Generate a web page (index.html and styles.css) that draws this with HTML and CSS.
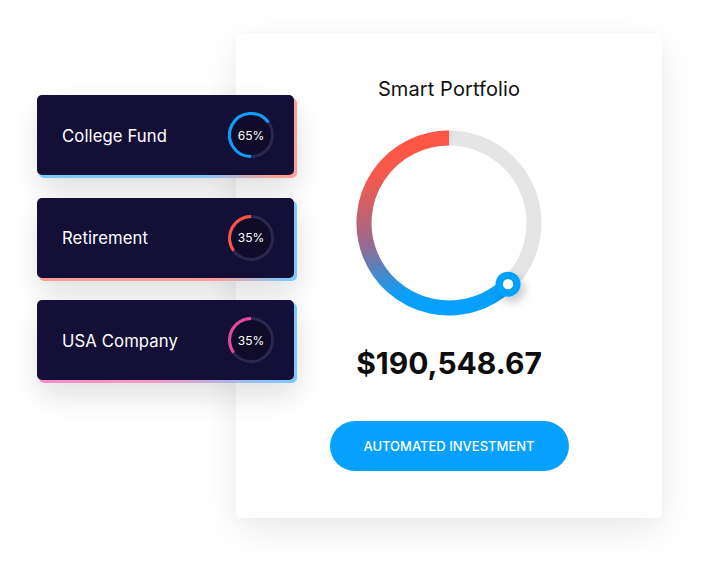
FILE: index.html
```html
<!DOCTYPE html>
<html lang="en">
<head>
<meta charset="utf-8">
<title>Smart Portfolio</title>
<link rel="stylesheet" href="styles.css">
</head>
<body>
<div class="stage">
  <section class="panel">
    <h2 class="title">Smart Portfolio</h2>
    <svg class="ring" viewBox="0 0 200 200" width="200" height="200" aria-hidden="true">
      <defs>
        <linearGradient id="arcGrad" x1="0.3" y1="0" x2="0.5" y2="1">
          <stop offset="0" stop-color="#ff5443"/>
          <stop offset="0.18" stop-color="#f45a4c"/>
          <stop offset="0.55" stop-color="#97698f"/>
          <stop offset="0.88" stop-color="#0a9ffa"/>
          <stop offset="1" stop-color="#06a0fe"/>
        </linearGradient>
        <filter id="knobShadow" x="-80%" y="-80%" width="300%" height="300%">
          <feDropShadow dx="4" dy="5" stdDeviation="5" flood-color="#000" flood-opacity="0.22"/>
        </filter>
        <filter id="innerSoft" x="-10%" y="-10%" width="120%" height="120%">
          <feGaussianBlur stdDeviation="2"/>
        </filter>
      </defs>
      <circle cx="100" cy="100" r="85" fill="none" stroke="#e5e5e5" stroke-width="15"/>
      <path d="M100 15 A85 85 0 1 0 159.05 161.14" fill="none" stroke="#000" stroke-opacity="0.12" stroke-width="4" filter="url(#innerSoft)" transform="translate(2 -4)"/>
      <path d="M100 15 A85 85 0 1 0 159.05 161.14" fill="none" stroke="url(#arcGrad)" stroke-width="15"/>
      <g filter="url(#knobShadow)">
        <circle cx="159.05" cy="161.14" r="12.5" fill="#06a0fe"/>
      </g>
      <circle cx="159.05" cy="161.14" r="5.2" fill="#fff"/>
    </svg>
    <div class="amount">$190,548.67</div>
    <button class="cta" type="button">AUTOMATED INVESTMENT</button>
  </section>

  <div class="goals">
    <div class="goal goal-college">
      <span class="goal-name">College Fund</span>
      <div class="dial">
        <svg viewBox="0 0 46 46" width="46" height="46" aria-hidden="true">
          <circle cx="23" cy="23" r="21.5" fill="#0f0b29" stroke="#2a2750" stroke-width="3"/>
          <path d="M23 44.5 A21.5 21.5 0 1 1 40.39 10.36" fill="none" stroke="#0b9ffb" stroke-width="3"/>
        </svg>
        <span class="dial-value">65%</span>
      </div>
    </div>
    <div class="goal goal-retire">
      <span class="goal-name">Retirement</span>
      <div class="dial">
        <svg viewBox="0 0 46 46" width="46" height="46" aria-hidden="true">
          <circle cx="23" cy="23" r="21.5" fill="#0f0b29" stroke="#2a2750" stroke-width="3"/>
          <path d="M23 1.5 A21.5 21.5 0 0 0 5.61 35.64" fill="none" stroke="#fb5443" stroke-width="3"/>
        </svg>
        <span class="dial-value">35%</span>
      </div>
    </div>
    <div class="goal goal-usa">
      <span class="goal-name">USA Company</span>
      <div class="dial">
        <svg viewBox="0 0 46 46" width="46" height="46" aria-hidden="true">
          <circle cx="23" cy="23" r="21.5" fill="#0f0b29" stroke="#2a2750" stroke-width="3"/>
          <path d="M23 1.5 A21.5 21.5 0 0 0 5.61 35.64" fill="none" stroke="#e2489d" stroke-width="3"/>
        </svg>
        <span class="dial-value">35%</span>
      </div>
    </div>
  </div>
</div>
</body>
</html>
```

FILE: styles.css
```css
* { box-sizing: border-box; }

html, body {
  margin: 0;
  padding: 0;
  background: #fff;
}

body {
  font-family: "Inter", "Liberation Sans", sans-serif;
  width: 703px;
  height: 565px;
  overflow: hidden;
}

.stage {
  position: relative;
  padding: 33px 0 0 236px;
}

.panel {
  width: 426px;
  height: 485px;
  background: #fff;
  border-radius: 5px;
  box-shadow: 0 12px 40px rgba(0, 0, 0, 0.085), 0 2px 8px rgba(0, 0, 0, 0.02);
  display: flex;
  flex-direction: column;
  align-items: center;
  padding-top: 44px;
}

.title {
  margin: 0;
  font-size: 20px;
  line-height: 24px;
  font-weight: 400;
  color: #111;
  letter-spacing: 0.1px;
}

.ring {
  display: block;
  margin-top: 21.5px;
  overflow: visible;
}

.amount {
  margin-top: 22.5px;
  font-size: 30px;
  line-height: 36px;
  font-weight: 700;
  color: #0d0d0d;
  letter-spacing: 0;
}

.cta {
  margin-top: 40px;
  width: 239px;
  height: 50px;
  border: 0;
  border-radius: 25px;
  background: #06a0fe;
  color: #fff;
  font-family: inherit;
  font-size: 13px;
  font-weight: 500;
  letter-spacing: 0;
  cursor: pointer;
}

.goals {
  position: absolute;
  left: 37px;
  top: 95px;
  z-index: 1;
  width: 257px;
  display: flex;
  flex-direction: column;
  gap: 22.5px;
}

.goal {
  position: relative;
  height: 80px;
  background: #140f37;
  border-radius: 5px;
  display: flex;
  align-items: center;
  justify-content: space-between;
  padding: 0 20px 0 25px;
}

.goal::before {
  content: "";
  position: absolute;
  top: 3px;
  left: 2px;
  right: -3px;
  bottom: -3px;
  border-radius: 5px;
  z-index: -1;
  box-shadow: 0 12px 30px rgba(0, 0, 0, 0.13);
}

.goal-college::before {
  background: linear-gradient(to right, #7dc9ff 0%, #7dc9ff 62%, #ff9f97 92%);
}

.goal-retire::before {
  background: linear-gradient(to right, #ff9d96 0%, #ff9d96 68%, #7dc9ff 96%);
}

.goal-usa::before {
  background: linear-gradient(to right, #f28fc4 0%, #f29ac6 45%, #7dc9ff 96%);
}

.goal-name {
  color: #fff;
  font-size: 16.7px;
  font-weight: 400;
  letter-spacing: 0.1px;
  padding-top: 1px;
}

.dial {
  display: grid;
  place-items: center;
  width: 46px;
  height: 46px;
}

.dial > * {
  grid-area: 1 / 1;
}

.dial svg {
  display: block;
}

.dial-value {
  color: #fff;
  font-size: 12px;
  font-weight: 400;
}
```
